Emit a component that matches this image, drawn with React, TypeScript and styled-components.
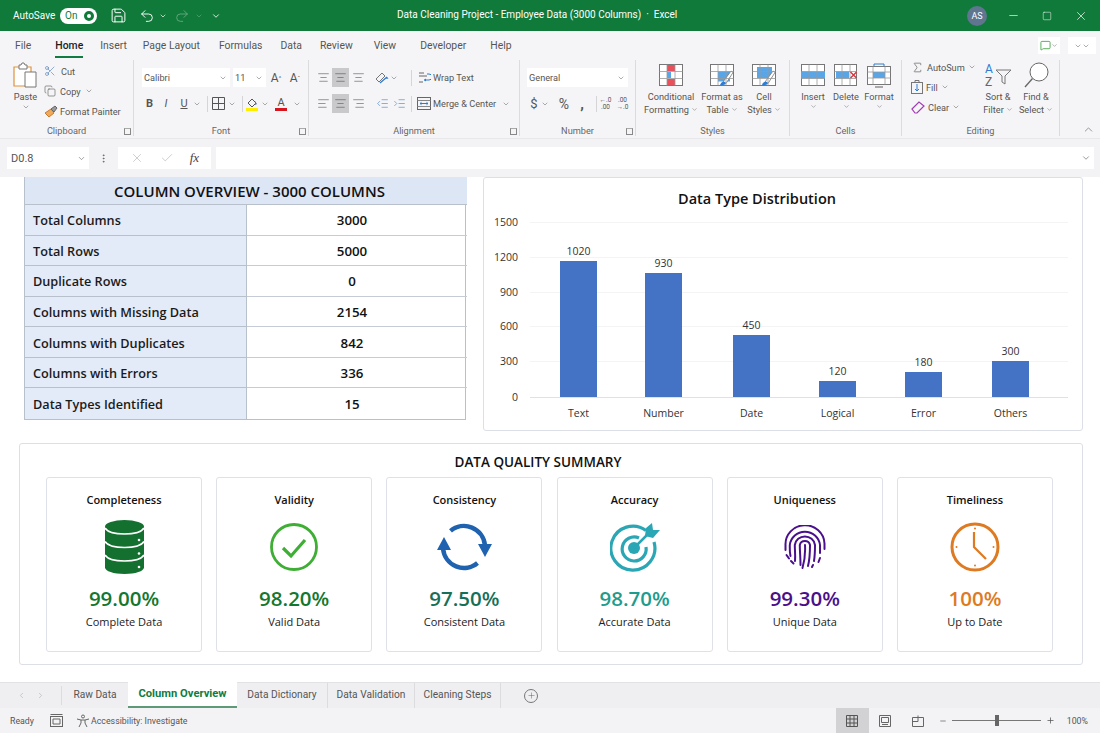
import React from "react";
import styled, { createGlobalStyle } from "styled-components";
import {
  AlignCenter,
  AlignLeft,
  AlignRight,
  ChevronDown,
  ChevronLeft,
  ChevronRight,
  ChevronUp,
  Copy,
  IndentDecrease,
  IndentIncrease,
  MessageSquare,
  Minus,
  Plus,
  Redo2,
  Save,
  Scissors,
  Sigma,
  Undo2,
  X,
  Check,
  Square,
  MoreVertical,
} from "lucide-react";

const GlobalStyle = createGlobalStyle`
  html, body { margin: 0; padding: 0; background: #fff; }
  * { box-sizing: border-box; }
  body { font-family: Roboto, "Noto Sans", sans-serif; color: #444; }
`;

const Page = styled.div`
  width: 1100px;
  height: 733px;
  display: flex;
  flex-direction: column;
  overflow: hidden;
  background: #fff;
`;

/* title bar */
const TitleBar = styled.div`
  height: 31px;
  flex: none;
  background: #107a3a;
  color: #fff;
  display: flex;
  align-items: center;
  font-size: 10px;
`;
const AutoSave = styled.span`
  margin-left: 13px;
  width: 47px;
`;
const Toggle = styled.span`
  width: 37px;
  height: 16px;
  border-radius: 8px;
  background: #fff;
  color: #107a3a;
  display: flex;
  align-items: center;
  justify-content: space-between;
  padding: 0 3px 0 5px;
  font-size: 10px;
`;
const ToggleDot = styled.span`
  width: 10px;
  height: 10px;
  border-radius: 50%;
  border: 3px solid #107a3a;
`;
const TitleIcon = styled.span<{ $w: number; $dim?: boolean }>`
  width: ${(p) => p.$w}px;
  display: flex;
  justify-content: center;
  opacity: ${(p) => (p.$dim ? 0.35 : 1)};
`;
const TitleText = styled.div`
  position: absolute;
  left: 397px;
  top: 9px;
  font-size: 10px;
  white-space: nowrap;
`;
const TitleRight = styled.div`
  margin-left: auto;
  display: flex;
  align-items: center;
  padding-right: 2px;
`;
const Avatar = styled.span`
  width: 20px;
  height: 20px;
  border-radius: 50%;
  background: #5f7590;
  font-size: 9px;
  display: flex;
  align-items: center;
  justify-content: center;
  margin-right: 9px;
`;
const WinButton = styled.span`
  width: 34px;
  display: flex;
  justify-content: center;
`;

/* ribbon tabs */
const TabRow = styled.div`
  height: 29px;
  flex: none;
  background: #f5f5f7;
  display: flex;
  align-items: center;
  font-size: 10.4px;
  position: relative;
`;
const RibbonTab = styled.span<{ $ml: number; $active?: boolean }>`
  margin-left: ${(p) => p.$ml}px;
  height: 23px;
  line-height: 21px;
  margin-top: 2px;
  white-space: nowrap;
  color: ${(p) => (p.$active ? "#1d1d1d" : "#555")};
  font-weight: ${(p) => (p.$active ? 500 : 400)};
  border-bottom: ${(p) => (p.$active ? "2px solid #107c41" : "2px solid transparent")};
`;
const TabActions = styled.div`
  margin-left: auto;
  padding-right: 4px;
  display: flex;
  gap: 8px;
  align-items: center;
`;
const TabAction = styled.span<{ $w: number }>`
  width: ${(p) => p.$w}px;
  height: 17px;
  background: #fff;
  display: flex;
  align-items: center;
  justify-content: center;
  color: #666;
`;

/* ribbon */
const Ribbon = styled.div`
  height: 79px;
  flex: none;
  background: #f5f5f7;
  display: flex;
  color: #555;
  font-size: 9.2px;
  border-bottom: 1px solid #e8e8ea;
`;
const Group = styled.div<{ $w: number }>`
  width: ${(p) => p.$w}px;
  flex: none;
  height: 76px;
  border-right: 1px solid #dcdcde;
  display: flex;
  flex-direction: column;
  position: relative;
`;
const GroupBody = styled.div<{ $pl?: number }>`
  flex: 1;
  display: flex;
  padding-left: ${(p) => p.$pl ?? 0}px;
  min-height: 0;
`;
const GroupLabel = styled.div`
  height: 12px;
  line-height: 14px;
  text-align: center;
  font-size: 9.2px;
  color: #666;
`;
const Launcher = styled.span`
  position: absolute;
  right: 2px;
  bottom: 1px;
  width: 7px;
  height: 7px;
  border: 1px solid #888;
  border-top-color: #aaa;
`;
const BigButton = styled.div<{ $w: number }>`
  width: ${(p) => p.$w}px;
  flex: none;
  display: flex;
  flex-direction: column;
  align-items: center;
  padding-top: 2px;
  line-height: 13px;
  text-align: center;
  white-space: nowrap;
`;
const BigIcon = styled.span`
  height: 26px;
  display: flex;
  align-items: center;
  justify-content: center;
  margin-bottom: 2px;
`;
const Stack = styled.div<{ $gap: number; $pt: number; $ml?: number; $w?: number }>`
  display: flex;
  flex-direction: column;
  gap: ${(p) => p.$gap}px;
  padding-top: ${(p) => p.$pt}px;
  margin-left: ${(p) => p.$ml ?? 0}px;
  ${(p) => (p.$w ? `width: ${p.$w}px;` : "")}
`;
const SmallRow = styled.div<{ $h?: number; $gap?: number }>`
  height: ${(p) => p.$h ?? 14}px;
  display: flex;
  align-items: center;
  gap: ${(p) => p.$gap ?? 4}px;
  white-space: nowrap;
`;
const SelectBox = styled.div<{ $w: number; $ml?: number }>`
  width: ${(p) => p.$w}px;
  height: 19px;
  margin-left: ${(p) => p.$ml ?? 0}px;
  background: #fff;
  display: flex;
  align-items: center;
  justify-content: space-between;
  padding: 0 3px 0 2px;
  flex: none;
`;
const ToolCell = styled.span<{ $w: number; $on?: boolean; $fs?: number }>`
  width: ${(p) => p.$w}px;
  height: 19px;
  flex: none;
  display: flex;
  align-items: center;
  justify-content: center;
  background: ${(p) => (p.$on ? "#c9c9cb" : "transparent")};
  font-size: ${(p) => p.$fs ?? 11}px;
  color: #555;
`;
const VSep = styled.span`
  width: 1px;
  height: 16px;
  background: #d5d5d7;
  flex: none;
`;
const ColorLetter = styled.span<{ $c: string }>`
  font-size: 11px;
  line-height: 11px;
  border-bottom: 3px solid ${(p) => p.$c};
  width: 12px;
  text-align: center;
`;
const TinyDec = styled.span`
  font-size: 6.5px;
  line-height: 7px;
  text-align: center;
  color: #555;
  white-space: nowrap;
`;
const Collapse = styled.div`
  flex: 1;
  display: flex;
  align-items: flex-end;
  justify-content: flex-end;
  padding: 0 5px 0 0;
  height: 76px;
`;

/* formula bar */
const FormulaBar = styled.div`
  height: 38px;
  flex: none;
  background: #f3f3f5;
  display: flex;
  align-items: flex-start;
  padding: 8px 6px 0 7px;
  color: #555;
`;
const NameBox = styled.div`
  width: 82px;
  height: 22px;
  background: #fff;
  font-size: 11px;
  display: flex;
  align-items: center;
  justify-content: space-between;
  padding: 0 3px 0 4px;
`;
const FxDots = styled.div`
  width: 29px;
  height: 22px;
  display: flex;
  align-items: center;
  justify-content: center;
`;
const FxButtons = styled.div`
  width: 93px;
  height: 22px;
  background: #fff;
  display: flex;
  align-items: center;
  justify-content: space-around;
  padding: 0 4px;
`;
const FxLabel = styled.span`
  font-family: "Liberation Serif", serif;
  font-style: italic;
  font-size: 13px;
  color: #444;
`;
const FormulaInput = styled.div`
  flex: 1;
  height: 22px;
  margin-left: 5px;
  background: #fff;
  display: flex;
  align-items: center;
  justify-content: flex-end;
  padding-right: 3px;
`;

/* sheet */
const Sheet = styled.div`
  flex: 1;
  min-height: 0;
  padding-left: 19px;
  background: #fff;
  font-family: "Open Sans", "Noto Sans", sans-serif;
`;
const TopRow = styled.div`
  display: flex;
  align-items: flex-start;
  height: 254px;
  padding-left: 5px;
`;
const OverviewTable = styled.div`
  width: 442px;
  height: 243px;
  display: grid;
  grid-template-columns: 222px 220px;
  grid-template-rows: 28px repeat(7, 1fr);
  border: 1px solid #b8c0cc;
  border-top: none;
`;
const TableHead = styled.div`
  grid-column: 1 / 3;
  background: #dde6f5;
  color: #111;
  font-weight: 600;
  font-size: 15px;
  display: flex;
  align-items: center;
  justify-content: center;
  padding-left: 7px;
  border-bottom: 1px solid #b8c0cc;
`;
const LabelCell = styled.div`
  background: #e4ebf8;
  color: #1a1a1a;
  font-weight: 600;
  font-size: 12.7px;
  display: flex;
  align-items: center;
  padding: 1px 0 0 8px;
  border-right: 1px solid #b8c0cc;
  border-bottom: 1px solid #b8c0cc;
  &:nth-last-child(2) { border-bottom: none; }
`;
const ValueCell = styled.div`
  color: #111;
  font-weight: 600;
  font-size: 13.3px;
  display: flex;
  align-items: center;
  justify-content: center;
  padding: 1px 10px 0 0;
  border-bottom: 1px solid #c6ccd6;
  &:last-child { border-bottom: none; }
`;
const ChartCard = styled.div`
  margin-left: 17px;
  width: 600px;
  height: 254px;
  background: #fff;
  border: 1px solid #dcdfe6;
  border-radius: 3px;
`;
const ChartSvg = styled.svg`
  display: block;
  font-family: "Open Sans", "Noto Sans", sans-serif;
`;
const QualityPanel = styled.div`
  margin-top: 12px;
  width: 1064px;
  height: 222px;
  border: 1px solid #dcdfe6;
  border-radius: 3px;
  padding: 0 26px;
`;
const QualityTitle = styled.div`
  height: 33px;
  padding: 9px 26px 0 0;
  line-height: 19px;
  text-align: center;
  font-weight: 600;
  font-size: 13.5px;
  color: #111;
`;
const CardRow = styled.div`
  display: flex;
  gap: 14.2px;
`;
const Card = styled.div`
  width: 156px;
  height: 175px;
  border: 1px solid #dfe1e8;
  border-radius: 3px;
  display: flex;
  flex-direction: column;
  align-items: center;
  padding-top: 14px;
`;
const CardTitle = styled.div`
  font-size: 11px;
  line-height: 16px;
  font-weight: 600;
  color: #111;
`;
const CardIcon = styled.div`
  height: 56px;
  margin-top: 11px;
  display: flex;
  align-items: center;
  justify-content: center;
`;
const CardValue = styled.div<{ $c: string }>`
  margin-top: 10px;
  font-size: 20.5px;
  line-height: 27px;
  font-weight: 600;
  color: ${(p) => p.$c};
`;
const CardSub = styled.div`
  margin-top: 2px;
  font-size: 11px;
  line-height: 16px;
  color: #222;
`;

/* sheet tabs */
const SheetBar = styled.div`
  height: 26px;
  flex: none;
  background: #efeff1;
  border-top: 1px solid #e2e2e4;
  display: flex;
  align-items: stretch;
  font-size: 10.2px;
  color: #555;
`;
const SheetNav = styled.div`
  width: 62px;
  display: flex;
  align-items: center;
  justify-content: center;
  gap: 10px;
  color: #bbb;
  border-right: 1px solid #dcdcde;
  margin: 3px 0;
`;
const SheetTab = styled.div<{ $w: number; $active?: boolean; $sep?: boolean }>`
  width: ${(p) => p.$w}px;
  display: flex;
  align-items: center;
  justify-content: center;
  padding-bottom: 2px;
  white-space: nowrap;
  background: ${(p) => (p.$active ? "#fff" : "transparent")};
  color: ${(p) => (p.$active ? "#107c41" : "#555")};
  font-weight: ${(p) => (p.$active ? 700 : 400)};
  font-size: ${(p) => (p.$active ? "11.2px" : "inherit")};
  border-bottom: ${(p) => (p.$active ? "2px solid #5f9a78" : "none")};
  border-right: ${(p) => (p.$sep ? "1px solid #dcdcde" : "none")};
  margin-top: ${(p) => (p.$active ? "-1px" : 0)};
`;
const AddSheet = styled.div`
  margin-left: 23px;
  display: flex;
  align-items: center;
`;
const AddCircle = styled.span`
  width: 14px;
  height: 14px;
  border: 1px solid #777;
  border-radius: 50%;
  display: flex;
  align-items: center;
  justify-content: center;
`;

/* status bar */
const StatusBar = styled.div`
  height: 25px;
  flex: none;
  background: #f3f3f5;
  display: flex;
  align-items: center;
  font-size: 8.8px;
  color: #555;
`;
const StatusText = styled.span<{ $ml: number; $mr?: number }>`
  margin-left: ${(p) => p.$ml}px;
  margin-right: ${(p) => p.$mr ?? 0}px;
  white-space: nowrap;
  display: flex;
`;
const StatusRight = styled.div`
  margin-left: auto;
  display: flex;
  align-items: center;
  height: 100%;
`;
const ViewButton = styled.span<{ $on?: boolean; $mr?: number }>`
  width: 33px;
  height: 100%;
  margin-right: ${(p) => p.$mr ?? 0}px;
  display: flex;
  align-items: center;
  justify-content: center;
  background: ${(p) => (p.$on ? "#d2d2d4" : "transparent")};
`;
const ZoomTrack = styled.span`
  width: 89px;
  height: 1px;
  background: #777;
  position: relative;
  margin: 0 5px;
`;
const ZoomThumb = styled.span`
  position: absolute;
  left: 43px;
  top: -5px;
  width: 4px;
  height: 11px;
  background: #666;
`;

/* ---- icons ---- */
const Chev = ({ s = 8 }: { s?: number }) => <ChevronDown size={s} strokeWidth={1.6} color="#666" />;

const PasteIcon = () => (
  <svg width="25" height="26" viewBox="0 0 25 26" fill="none">
    <path d="M1 5h17v19H1z" fill="#fff" stroke="#e0923a" strokeWidth="1.2" />
    <path d="M6 3h2l1-2h2l1 2h2v4H6z" fill="#fff" stroke="#777" />
    <path d="M12 10h11v15H12z" fill="#fff" stroke="#777" />
  </svg>
);
const PainterIcon = () => (
  <svg width="14" height="13" viewBox="0 0 14 13" fill="none">
    <path d="M1 8l6-4 3 4-5 4z" fill="#f0a85a" stroke="#c97a2a" />
    <path d="M7 4l4-3 2 2-3 4z" fill="#999" stroke="#666" />
  </svg>
);
const GridIcon = () => (
  <svg width="13" height="13" viewBox="0 0 13 13" fill="none" stroke="#555">
    <path d="M.5.5h12v12H.5zM6.500.5v12M.5 6.500h12" />
  </svg>
);
const FillIcon = () => (
  <svg width="12" height="14" viewBox="0 0 12 14" fill="none">
    <path d="M2 6l4-4 4 4-4 4z" stroke="#555" />
    <path d="M9 4l2 3-2 1z" fill="#2b7cd3" />
    <rect x="0" y="11" width="12" height="3" fill="#ffee00" />
  </svg>
);
const RotateIcon = () => (
  <svg width="14" height="14" viewBox="0 0 14 14" fill="none">
    <path d="M1 8l6-6 3 3-6 6z" stroke="#777" />
    <path d="M5 12l7-6" stroke="#2b7cd3" strokeWidth="1.3" />
    <path d="M12 6l1.500 1.500L11 8z" fill="#2b7cd3" />
  </svg>
);
const WrapIcon = () => (
  <svg width="13" height="13" viewBox="0 0 13 13" fill="none">
    <path d="M1 2h5M1 5h8M1 11h4" stroke="#666" />
    <path d="M9 3h2a1.500 1.500 0 0 1 0 6H6" stroke="#2b7cd3" />
    <path d="M6 9l2-1.500v3z" fill="#2b7cd3" />
  </svg>
);
const MergeIcon = () => (
  <svg width="14" height="13" viewBox="0 0 14 13" fill="none">
    <rect x=".5" y=".5" width="13" height="12" stroke="#666" />
    <path d="M.5 3.500h13M.5 9.500h13" stroke="#888" />
    <path d="M3 6.500h8M3 6.500l1.500-1.200M3 6.500l1.500 1.200M11 6.500L9.500 5.300M11 6.500L9.500 7.700" stroke="#2b7cd3" />
  </svg>
);
const TableGrid = ({ children }: { children?: React.ReactNode }) => (
  <svg width="24" height="22" viewBox="0 0 24 22" fill="none">
    <rect x=".5" y=".5" width="23" height="21" fill="#fff" stroke="#777" />
    {children}
    <path d="M.5 7.500h23M.5 14.500h23M8 .5v21M16 .5v21" stroke="#999" strokeWidth=".8" />
  </svg>
);
const CondIcon = () => (
  <TableGrid>
    <rect x="8" y="1" width="8" height="6" fill="#e8505b" />
    <rect x="8" y="8" width="4" height="6" fill="#5aa5e6" />
    <rect x="8" y="15" width="8" height="6" fill="#e8505b" />
  </TableGrid>
);
const BrushOver = () => (
  <>
    <path d="M13 18l8-11 2 1.500-7 11z" fill="#fff" stroke="#777" strokeWidth=".8" />
    <path d="M10 21c1-3 3-4 5-3s0 4-5 3z" fill="#2b7cd3" />
  </>
);
const FormatTableIcon = () => (
  <TableGrid>
    <rect x="8" y="7.500" width="12" height="10" fill="#5aa5e6" />
    <BrushOver />
  </TableGrid>
);
const CellStylesIcon = () => (
  <TableGrid>
    <rect x="5" y="3" width="15" height="11" fill="#5aa5e6" />
    <BrushOver />
  </TableGrid>
);
const InsertCellIcon = () => (
  <TableGrid>
    <rect x="0" y="7.500" width="24" height="7" fill="#5aa5e6" />
  </TableGrid>
);
const DeleteCellIcon = () => (
  <svg width="24" height="22" viewBox="0 0 24 22" fill="none">
    <rect x=".5" y=".5" width="22" height="21" fill="#fff" stroke="#777" />
    <rect x="2" y="7.500" width="13" height="7" fill="#5aa5e6" />
    <path d="M.5 7.500h22M.5 14.500h22M8 .5v21M16 .5v21" stroke="#999" strokeWidth=".8" />
    <path d="M16.500 8l6 6M22.500 8l-6 6" stroke="#d8323c" strokeWidth="1.4" />
  </svg>
);
const FormatCellIcon = () => (
  <svg width="24" height="25" viewBox="0 0 24 25" fill="none">
    <path d="M7 3V1h10v2" stroke="#2b7cd3" />
    <rect x=".5" y="3.500" width="23" height="18" fill="#fff" stroke="#777" />
    <rect x="6" y="9" width="12" height="6" fill="#5aa5e6" />
    <path d="M.5 9h23M.5 15h23M6 3.500v18M18 3.500v18" stroke="#999" strokeWidth=".8" />
    <path d="M8 24h8" stroke="#aaa" strokeWidth="2" />
  </svg>
);
const FillDownIcon = () => (
  <svg width="12" height="14" viewBox="0 0 12 14" fill="none">
    <rect x=".5" y="2.500" width="11" height="11" stroke="#777" />
    <path d="M6 4v7M4 9l2 2 2-2" stroke="#2b7cd3" />
    <path d="M4 2.500V.5h4v2" stroke="#777" />
  </svg>
);
const EraserIcon = () => (
  <svg width="14" height="13" viewBox="0 0 14 13" fill="none">
    <path d="M1 8l7-7 5 4-7 7H4z" stroke="#a23bb5" strokeWidth="1.2" />
  </svg>
);
const SortIcon = () => (
  <svg width="28" height="26" viewBox="0 0 28 26" fill="none">
    <text x="1" y="11" fontSize="12" fill="#2b7cd3" fontFamily="Roboto, sans-serif">A</text>
    <text x="1" y="24" fontSize="12" fill="#666" fontFamily="Roboto, sans-serif">Z</text>
    <path d="M12 8h15l-6 6v8l-3-2v-6z" stroke="#777" />
  </svg>
);
const FindIcon = () => (
  <svg width="25" height="26" viewBox="0 0 25 26" fill="none" stroke="#666">
    <circle cx="15" cy="10" r="9" fill="#fff" />
    <path d="M8.500 16.500L1 25" strokeWidth="1.3" />
  </svg>
);
const PageIcon = () => (
  <svg width="13" height="13" viewBox="0 0 13 13" fill="none" stroke="#666">
    <rect x=".5" y="2.500" width="12" height="10" />
    <path d="M.5 .5h12M3 5h7v5H3z" />
  </svg>
);
const AccessIcon = () => (
  <svg width="14" height="14" viewBox="0 0 14 14" fill="none" stroke="#666">
    <circle cx="7" cy="2.500" r="1.500" />
    <path d="M1 5l4 1v3l-2 4M13 5L9 6v3l2 4M5 6h4" />
  </svg>
);
const NormalViewIcon = () => (
  <svg width="12" height="12" viewBox="0 0 12 12" fill="none" stroke="#555">
    <path d="M.5.5h11v11H.5zM4 .5v11M8 .5v11M.5 4h11M.5 8h11" />
  </svg>
);
const LayoutViewIcon = () => (
  <svg width="12" height="12" viewBox="0 0 12 12" fill="none" stroke="#666">
    <path d="M.5.5h11v11H.5zM2.500 2.500h7v5h-7zM3 9.500h6" />
  </svg>
);
const BreakViewIcon = () => (
  <svg width="12" height="12" viewBox="0 0 12 12" fill="none" stroke="#666">
    <path d="M.5 2.500h11v9H.5zM6 .5v6H.5" />
  </svg>
);

const DatabaseIcon = () => (
  <svg width="39" height="54" viewBox="0 0 39 54" fill="none">
    <path d="M0 6.500a19.500 6.500 0 0 1 39 0v41c0 3.600-8.700 6.500-19.500 6.500S0 51.100 0 47.500z" fill="#13702f" />
    <path d="M0 8c2 3.800 10 6 19.500 6S37 11.800 39 8M0 21.500c2 3.800 10 6 19.500 6s17.500-2.200 19.500-6M0 35c2 3.800 10 6 19.500 6S37 38.800 39 35" stroke="#fff" strokeWidth="1.700" />
    <circle cx="34" cy="20" r="1.300" fill="#fff" />
    <circle cx="34" cy="33.500" r="1.300" fill="#fff" />
    <circle cx="34" cy="47" r="1.300" fill="#fff" />
  </svg>
);
const ValidIcon = () => (
  <svg width="48" height="48" viewBox="0 0 48 48" fill="none">
    <circle cx="24" cy="24" r="22.500" stroke="#3fae35" strokeWidth="2.800" />
    <path d="M13 25l8 8 14-16" stroke="#3fae35" strokeWidth="3.200" />
  </svg>
);
const SyncIcon = () => (
  <svg width="55" height="48" viewBox="0 0 55 48" fill="none">
    <path d="M13.500 7.900A21 21 0 0 1 47.900 22" stroke="#1f63b0" strokeWidth="4.500" />
    <path d="M40.500 40A21 21 0 0 1 6.100 26" stroke="#1f63b0" strokeWidth="4.500" />
    <path d="M41 21h14l-7 13z" fill="#1f63b0" />
    <path d="M0 27h14L7 14z" fill="#1f63b0" />
  </svg>
);
const TargetIcon = () => (
  <svg width="50" height="50" viewBox="0 0 50 50" fill="none">
    <path d="M36 8.500A22 22 0 1 0 44 20" stroke="#2aa6b4" strokeWidth="3.200" />
    <path d="M29 16a12 12 0 1 0 7 9" stroke="#2aa6b4" strokeWidth="3.200" />
    <circle cx="24" cy="26" r="6" fill="#2aa6b4" />
    <path d="M24 26L38 12" stroke="#2aa6b4" strokeWidth="2.500" />
    <path d="M36 6l6-5 1 7 7 0-7 8-8-2z" fill="#2aa6b4" />
  </svg>
);
const FingerprintIcon = () => (
  <svg width="42" height="44" viewBox="0 0 42 44" fill="none" stroke="#4a0f8c" strokeWidth="2" strokeLinecap="round">
    <path d="M1.500 25V20A19.500 19 0 0 1 40.500 18.500V24" />
    <path d="M6.500 31C5.500 27 5.800 23 5.800 20A15.200 15 0 0 1 36 20V28" />
    <path d="M11 36C11.500 30 10.800 25 10.800 20A10.200 10 0 0 1 31 20C31 26 31 30 30 36" />
    <path d="M16.500 40C16.500 33 15.800 26 15.800 20A5.200 5 0 0 1 26 20C26 27 26 33 24 41" />
    <path d="M21 20C21.500 28 20.500 36 18.500 43" />
    <path d="M36 33L34.500 37M2.500 30L5 33.500M7 36L9.500 38.500M29 40L28 42" />
  </svg>
);
const ClockIcon = () => (
  <svg width="50" height="50" viewBox="0 0 50 50" fill="none">
    <circle cx="25" cy="25" r="23" stroke="#de7a22" strokeWidth="3" />
    <path d="M24 10v15l12 12" stroke="#de7a22" strokeWidth="2.200" />
    <g fill="#de7a22">
      <circle cx="25" cy="6.500" r="1" />
      <circle cx="25" cy="43.500" r="1" />
      <circle cx="6.500" cy="25" r="1" />
      <circle cx="43.500" cy="25" r="1" />
    </g>
  </svg>
);

/* ---- data ---- */
const overview: [string, string][] = [
  ["Total Columns", "3000"],
  ["Total Rows", "5000"],
  ["Duplicate Rows", "0"],
  ["Columns with Missing Data", "2154"],
  ["Columns with Duplicates", "842"],
  ["Columns with Errors", "336"],
  ["Data Types Identified", "15"],
];

// bar x and top are page coordinates measured from the reference, less the card origin
const originX = 484;
const originY = 178;
const axis = [
  { label: "1500", y: 222 },
  { label: "1200", y: 257 },
  { label: "900", y: 292 },
  { label: "600", y: 326 },
  { label: "300", y: 361 },
  { label: "0", y: 397 },
];
const bars = [
  { name: "Text", value: "1020", x: 560, top: 261 },
  { name: "Number", value: "930", x: 645, top: 273 },
  { name: "Date", value: "450", x: 733, top: 335 },
  { name: "Logical", value: "120", x: 819, top: 381 },
  { name: "Error", value: "180", x: 905, top: 372 },
  { name: "Others", value: "300", x: 992, top: 361 },
];

const quality = [
  { title: "Completeness", value: "99.00%", sub: "Complete Data", color: "#13782f", icon: <DatabaseIcon /> },
  { title: "Validity", value: "98.20%", sub: "Valid Data", color: "#13782f", icon: <ValidIcon /> },
  { title: "Consistency", value: "97.50%", sub: "Consistent Data", color: "#15705a", icon: <SyncIcon /> },
  { title: "Accuracy", value: "98.70%", sub: "Accurate Data", color: "#1d9c90", icon: <TargetIcon /> },
  { title: "Uniqueness", value: "99.30%", sub: "Unique Data", color: "#4a0f8c", icon: <FingerprintIcon /> },
  { title: "Timeliness", value: "100%", sub: "Up to Date", color: "#de7a22", icon: <ClockIcon /> },
];

const ribbonTabs = [
  { name: "File", ml: 15 },
  { name: "Home", ml: 24, active: true },
  { name: "Insert", ml: 17 },
  { name: "Page Layout", ml: 16 },
  { name: "Formulas", ml: 19 },
  { name: "Data", ml: 18 },
  { name: "Review", ml: 18 },
  { name: "View", ml: 21 },
  { name: "Developer", ml: 24 },
  { name: "Help", ml: 24 },
];

const App: React.FC = () => {
  return (
    <Page>
      <GlobalStyle />
      <TitleBar>
        <AutoSave>AutoSave</AutoSave>
        <Toggle>
          On
          <ToggleDot />
        </Toggle>
        <TitleIcon $w={42}><Save size={17} strokeWidth={1.4} /></TitleIcon>
        <TitleIcon $w={16}><Undo2 size={16} strokeWidth={1.4} /></TitleIcon>
        <TitleIcon $w={16}><ChevronDown size={8} /></TitleIcon>
        <TitleIcon $w={22} $dim><Redo2 size={16} strokeWidth={1.4} /></TitleIcon>
        <TitleIcon $w={12} $dim><ChevronDown size={8} /></TitleIcon>
        <TitleIcon $w={22}><ChevronDown size={10} /></TitleIcon>
        <TitleText>Data Cleaning Project - Employee Data (3000 Columns)&nbsp; · &nbsp;Excel</TitleText>
        <TitleRight>
          <Avatar>AS</Avatar>
          <WinButton><Minus size={13} strokeWidth={1.2} /></WinButton>
          <WinButton><Square size={10} strokeWidth={1.2} /></WinButton>
          <WinButton><X size={14} strokeWidth={1.2} /></WinButton>
        </TitleRight>
      </TitleBar>

      <TabRow>
        {ribbonTabs.map((t) => (
          <RibbonTab key={t.name} $ml={t.ml} $active={t.active}>{t.name}</RibbonTab>
        ))}
        <TabActions>
          <TabAction $w={22}>
            <MessageSquare size={11} color="#4fa84f" />
            <Chev s={7} />
          </TabAction>
          <TabAction $w={28}>
            <Chev />
            <Chev />
          </TabAction>
        </TabActions>
      </TabRow>

      <Ribbon>
        <Group $w={134}>
          <GroupBody $pl={12}>
            <BigButton $w={27}>
              <BigIcon><PasteIcon /></BigIcon>
              Paste
              <Chev />
            </BigButton>
            <Stack $gap={6} $pt={4} $ml={5}>
              <SmallRow $gap={5}><Scissors size={12} strokeWidth={1.2} color="#4a78b5" />Cut</SmallRow>
              <SmallRow $gap={4}><Copy size={12} strokeWidth={1.2} />Copy<Chev /></SmallRow>
              <SmallRow $gap={2}><PainterIcon />Format Painter</SmallRow>
            </Stack>
          </GroupBody>
          <GroupLabel>Clipboard</GroupLabel>
          <Launcher />
        </Group>

        <Group $w={175}>
          <GroupBody $pl={8}>
            <Stack $gap={7} $pt={8}>
              <SmallRow $h={19} $gap={0}>
                <SelectBox $w={88}>Calibri<Chev /></SelectBox>
                <SelectBox $w={33} $ml={3}>11<Chev /></SelectBox>
                <ToolCell $w={20} $fs={12}>A<sup style={{ fontSize: 6 }}>^</sup></ToolCell>
                <ToolCell $w={18} $fs={12}>A<sup style={{ fontSize: 6 }}>ˇ</sup></ToolCell>
              </SmallRow>
              <SmallRow $h={19} $gap={0}>
                <ToolCell $w={15}><b>B</b></ToolCell>
                <ToolCell $w={18}><i>I</i></ToolCell>
                <ToolCell $w={18}><u>U</u></ToolCell>
                <Chev />
                <ToolCell $w={6} />
                <VSep />
                <ToolCell $w={20}><GridIcon /></ToolCell>
                <Chev />
                <ToolCell $w={6} />
                <VSep />
                <ToolCell $w={18}><FillIcon /></ToolCell>
                <Chev />
                <ToolCell $w={6} />
                <ToolCell $w={12}><ColorLetter $c="#d8151f">A</ColorLetter></ToolCell>
                <ToolCell $w={6} />
                <Chev />
              </SmallRow>
            </Stack>
          </GroupBody>
          <GroupLabel>Font</GroupLabel>
          <Launcher />
        </Group>

        <Group $w={211}>
          <GroupBody $pl={5}>
            <Stack $gap={7} $pt={8}>
              <SmallRow $h={19} $gap={0}>
                <ToolCell $w={18}><AlignCenter size={13} strokeWidth={1.1} /></ToolCell>
                <ToolCell $w={17} $on><AlignCenter size={13} strokeWidth={1.1} /></ToolCell>
                <ToolCell $w={18}><AlignCenter size={13} strokeWidth={1.1} /></ToolCell>
                <ToolCell $w={7} />
                <ToolCell $w={16}><RotateIcon /></ToolCell>
                <Chev />
                <ToolCell $w={13} />
                <VSep />
                <ToolCell $w={6} />
                <SmallRow $gap={2}><WrapIcon />Wrap Text</SmallRow>
              </SmallRow>
              <SmallRow $h={19} $gap={0}>
                <ToolCell $w={18}><AlignLeft size={13} strokeWidth={1.1} /></ToolCell>
                <ToolCell $w={17} $on><AlignCenter size={13} strokeWidth={1.1} /></ToolCell>
                <ToolCell $w={18}><AlignRight size={13} strokeWidth={1.1} /></ToolCell>
                <ToolCell $w={7} />
                <ToolCell $w={17}><IndentDecrease size={13} strokeWidth={1.1} color="#3e7fc4" /></ToolCell>
                <ToolCell $w={17}><IndentIncrease size={13} strokeWidth={1.1} color="#3e7fc4" /></ToolCell>
                <ToolCell $w={3} />
                <VSep />
                <ToolCell $w={5} />
                <SmallRow $gap={2}><MergeIcon />Merge &amp; Center<ToolCell $w={2} /><Chev /></SmallRow>
              </SmallRow>
            </Stack>
          </GroupBody>
          <GroupLabel>Alignment</GroupLabel>
          <Launcher />
        </Group>

        <Group $w={116}>
          <GroupBody $pl={7}>
            <Stack $gap={7} $pt={8}>
              <SelectBox $w={101}>General<Chev /></SelectBox>
              <SmallRow $h={19} $gap={0}>
                <ToolCell $w={14} $fs={13}>$</ToolCell>
                <Chev />
                <ToolCell $w={6} />
                <ToolCell $w={18} $fs={14}>%</ToolCell>
                <ToolCell $w={18} $fs={15}><b>,</b></ToolCell>
                <ToolCell $w={5} />
                <VSep />
                <ToolCell $w={17}><TinyDec>←.0<br />.00</TinyDec></ToolCell>
                <ToolCell $w={17}><TinyDec>.00<br />→.0</TinyDec></ToolCell>
              </SmallRow>
            </Stack>
          </GroupBody>
          <GroupLabel>Number</GroupLabel>
          <Launcher />
        </Group>

        <Group $w={154}>
          <GroupBody $pl={7}>
            <BigButton $w={56}>
              <BigIcon><CondIcon /></BigIcon>
              Conditional
              <SmallRow $h={13} $gap={2}>Formatting<Chev s={7} /></SmallRow>
            </BigButton>
            <BigButton $w={46}>
              <BigIcon><FormatTableIcon /></BigIcon>
              Format as
              <SmallRow $h={13} $gap={2}>Table<Chev s={7} /></SmallRow>
            </BigButton>
            <BigButton $w={38}>
              <BigIcon><CellStylesIcon /></BigIcon>
              Cell
              <SmallRow $h={13} $gap={2}>Styles<Chev s={7} /></SmallRow>
            </BigButton>
          </GroupBody>
          <GroupLabel>Styles</GroupLabel>
        </Group>

        <Group $w={112}>
          <GroupBody $pl={6}>
            <BigButton $w={34}>
              <BigIcon><InsertCellIcon /></BigIcon>
              Insert
              <Chev s={7} />
            </BigButton>
            <BigButton $w={32}>
              <BigIcon><DeleteCellIcon /></BigIcon>
              Delete
              <Chev s={7} />
            </BigButton>
            <BigButton $w={34}>
              <BigIcon><FormatCellIcon /></BigIcon>
              Format
              <Chev s={7} />
            </BigButton>
          </GroupBody>
          <GroupLabel>Cells</GroupLabel>
        </Group>

        <Group $w={158}>
          <GroupBody $pl={9}>
            <Stack $gap={6} $pt={0} $w={68}>
              <SmallRow $gap={3}><Sigma size={13} strokeWidth={1.2} />AutoSum<Chev /></SmallRow>
              <SmallRow $gap={3}><FillDownIcon />Fill<Chev /></SmallRow>
              <SmallRow $gap={3}><EraserIcon />Clear<Chev /></SmallRow>
            </Stack>
            <BigButton $w={38}>
              <BigIcon><SortIcon /></BigIcon>
              Sort &amp;
              <SmallRow $h={13} $gap={2}>Filter<Chev s={7} /></SmallRow>
            </BigButton>
            <BigButton $w={38}>
              <BigIcon><FindIcon /></BigIcon>
              Find &amp;
              <SmallRow $h={13} $gap={2}>Select<Chev s={7} /></SmallRow>
            </BigButton>
          </GroupBody>
          <GroupLabel>Editing</GroupLabel>
        </Group>

        <Collapse><ChevronUp size={13} strokeWidth={1.2} color="#666" /></Collapse>
      </Ribbon>

      <FormulaBar>
        <NameBox>D0.8<Chev s={9} /></NameBox>
        <FxDots><MoreVertical size={11} strokeWidth={1.5} /></FxDots>
        <FxButtons>
          <X size={14} strokeWidth={1} color="#aaa" />
          <Check size={14} strokeWidth={1} color="#aaa" />
          <FxLabel>fx</FxLabel>
        </FxButtons>
        <FormulaInput><Chev s={10} /></FormulaInput>
      </FormulaBar>

      <Sheet>
        <TopRow>
          <OverviewTable>
            <TableHead>COLUMN OVERVIEW - 3000 COLUMNS</TableHead>
            {overview.map(([label, value]) => (
              <React.Fragment key={label}>
                <LabelCell>{label}</LabelCell>
                <ValueCell>{value}</ValueCell>
              </React.Fragment>
            ))}
          </OverviewTable>
          <ChartCard>
            <ChartSvg width="598" height="252" viewBox="0 0 598 252">
              <text x={273} y={26} textAnchor="middle" fontSize="14.5" fontWeight="600" fill="#111">
                Data Type Distribution
              </text>
              {axis.map((a) => (
                <React.Fragment key={a.label}>
                  <line
                    x1={530 - originX}
                    x2={1068 - originX}
                    y1={a.y - originY + 0.5}
                    y2={a.y - originY + 0.5}
                    stroke={a.label === "0" ? "#dfe1e6" : "#f4f4f6"}
                  />
                  <text x={518 - originX} y={a.y - originY + 4} textAnchor="end" fontSize="10.5" fill="#333">
                    {a.label}
                  </text>
                </React.Fragment>
              ))}
              {bars.map((b) => (
                <React.Fragment key={b.name}>
                  <rect x={b.x - originX} y={b.top - originY} width={37} height={397 - b.top} fill="#4472c4" />
                  <text x={b.x + 18.5 - originX} y={b.top - originY - 6} textAnchor="middle" fontSize="10.5" fill="#333">
                    {b.value}
                  </text>
                  <text x={b.x + 18.5 - originX} y={417 - originY} textAnchor="middle" fontSize="10.5" fill="#333">
                    {b.name}
                  </text>
                </React.Fragment>
              ))}
            </ChartSvg>
          </ChartCard>
        </TopRow>

        <QualityPanel>
          <QualityTitle>DATA QUALITY SUMMARY</QualityTitle>
          <CardRow>
            {quality.map((q) => (
              <Card key={q.title}>
                <CardTitle>{q.title}</CardTitle>
                <CardIcon>{q.icon}</CardIcon>
                <CardValue $c={q.color}>{q.value}</CardValue>
                <CardSub>{q.sub}</CardSub>
              </Card>
            ))}
          </CardRow>
        </QualityPanel>
      </Sheet>

      <SheetBar>
        <SheetNav>
          <ChevronLeft size={9} />
          <ChevronRight size={9} />
        </SheetNav>
        <SheetTab $w={66}>Raw Data</SheetTab>
        <SheetTab $w={109} $active>Column Overview</SheetTab>
        <SheetTab $w={91} $sep>Data Dictionary</SheetTab>
        <SheetTab $w={87} $sep>Data Validation</SheetTab>
        <SheetTab $w={86} $sep>Cleaning Steps</SheetTab>
        <AddSheet>
          <AddCircle><Plus size={9} strokeWidth={1.2} /></AddCircle>
        </AddSheet>
      </SheetBar>

      <StatusBar>
        <StatusText $ml={10}>Ready</StatusText>
        <StatusText $ml={16}><PageIcon /></StatusText>
        <StatusText $ml={13}><AccessIcon /></StatusText>
        <StatusText $ml={1}>Accessibility: Investigate</StatusText>
        <StatusRight>
          <ViewButton $on><NormalViewIcon /></ViewButton>
          <ViewButton><LayoutViewIcon /></ViewButton>
          <ViewButton $mr={4}><BreakViewIcon /></ViewButton>
          <Minus size={8} />
          <ZoomTrack><ZoomThumb /></ZoomTrack>
          <Plus size={9} />
          <StatusText $ml={12} $mr={12}>100%</StatusText>
        </StatusRight>
      </StatusBar>
    </Page>
  );
};

export default App;
